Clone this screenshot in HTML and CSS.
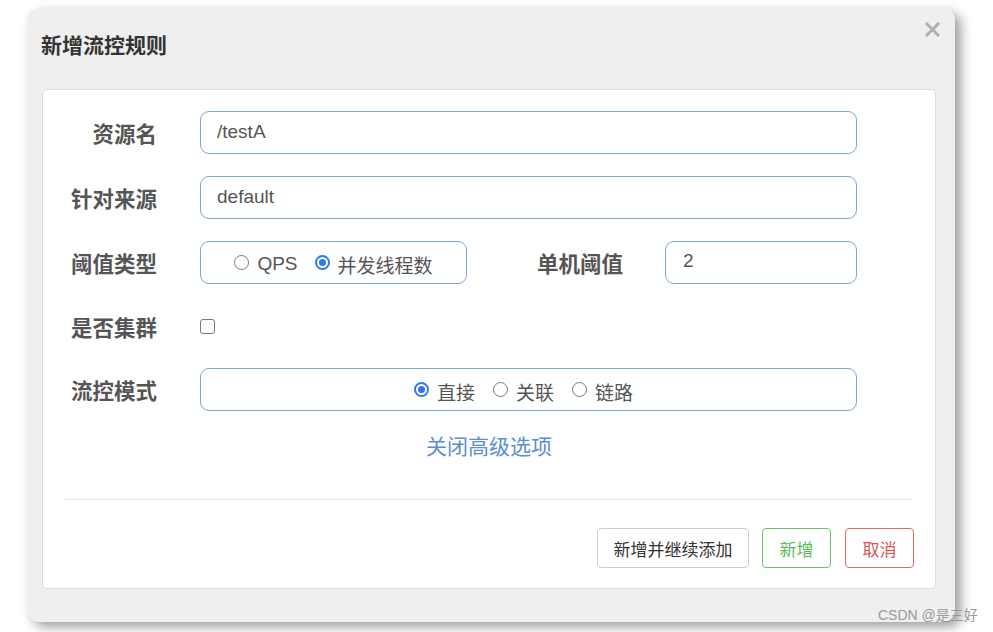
FILE: index.html
```html
<!DOCTYPE html>
<html lang="zh-CN">
<head>
<meta charset="utf-8">
<title>新增流控规则</title>
<link rel="stylesheet" href="styles.css">
</head>
<body>
<div class="dialog">
  <div class="dialog-header">
    <h3 class="dialog-title">新增流控规则</h3>
    <span class="close" aria-label="close">
      <svg width="15" height="15" viewBox="0 0 15 15"><path d="M2 2 L13 13 M13 2 L2 13" stroke="#b0b0b0" stroke-width="3" stroke-linecap="square"/></svg>
    </span>
  </div>
  <div class="panel">
    <div class="row">
      <label class="label">资源名</label>
      <div class="field wide">/testA</div>
    </div>
    <div class="row">
      <label class="label">针对来源</label>
      <div class="field wide">default</div>
    </div>
    <div class="row">
      <label class="label">阈值类型</label>
      <div class="field group small-group">
        <span class="opt"><span class="radio"></span>QPS</span>
        <span class="opt"><span class="radio on"></span>并发线程数</span>
      </div>
      <label class="label label2">单机阈值</label>
      <div class="field narrow">2</div>
    </div>
    <div class="row row-check">
      <label class="label">是否集群</label>
      <span class="checkbox"></span>
    </div>
    <div class="row">
      <label class="label">流控模式</label>
      <div class="field group wide mode-group">
        <span class="opt"><span class="radio on"></span>直接</span>
        <span class="opt"><span class="radio"></span>关联</span>
        <span class="opt"><span class="radio"></span>链路</span>
      </div>
    </div>
    <div class="link-row"><a class="link">关闭高级选项</a></div>
    <div class="divider"></div>
    <div class="actions">
      <button class="btn btn-default">新增并继续添加</button>
      <button class="btn btn-success">新增</button>
      <button class="btn btn-danger">取消</button>
    </div>
  </div>
</div>
<div class="watermark">CSDN @是三好</div>
</body>
</html>
```
FILE: styles.css
```css
* { box-sizing: border-box; }
html, body { margin: 0; padding: 0; background: #fff; }
body {
  padding: 8px 0 0 27px;
  font-family: "Liberation Sans", "Noto Sans CJK SC", sans-serif;
  color: #555;
  position: relative;
  width: 993px;
  height: 632px;
  overflow: hidden;
}
.dialog {
  width: 928px;
  height: 614px;
  background: #efefef;
  border-radius: 12px;
  box-shadow: 6px 5px 12px rgba(0,0,0,0.38);
  display: flex;
  flex-direction: column;
}
.dialog-header {
  height: 81px;
  padding: 24px 15px 0 14px;
  display: flex;
  justify-content: space-between;
  align-items: flex-start;
}
.dialog-title {
  margin: 0;
  font-family: "Noto Sans CJK SC", sans-serif;
  font-size: 21px;
  line-height: 25px;
  font-weight: 700;
  color: #333;
}
.close { margin-top: -10px; display: block; height: 15px; }
.close svg { display: block; }
.panel {
  margin: 0 19px 0 15px;
  height: 500px;
  background: #fff;
  border: 1px solid #dcdcdc;
  border-radius: 5px;
  padding: 21px 0 0;
}
.row {
  display: flex;
  align-items: center;
  height: 43px;
  margin-bottom: 22px;
}
.row.row-check { height: 40px; }
.label {
  width: 114px;
  margin-right: 43px;
  text-align: right;
  font-family: "Noto Sans CJK SC", sans-serif;
  font-weight: 700;
  font-size: 21.5px;
  color: #555;
  flex: none;
}
.label2 { width: 156px; margin-right: 42px; }
.field {
  height: 43px;
  border: 1px solid #7fa5d8;
  border-radius: 9px;
  padding: 0 16px;
  display: flex;
  align-items: center;
  font-size: 19px;
  color: #555;
  flex: none;
}
.field.wide { width: 657px; }
.field.narrow { width: 192px; padding-left: 17px; padding-bottom: 3px; }
.row .field.wide { padding-bottom: 1px; }
.small-group { width: 267px; }
.group { justify-content: center; gap: 17px; padding-top: 3px; }
.row .field.group { padding-bottom: 0; }
.row .mode-group { padding-right: 26px; gap: 18px; }
.opt {
  display: inline-flex;
  align-items: center;
  font-family: "Liberation Sans", "Noto Sans CJK SC", sans-serif;
  font-size: 19px;
  color: #555;
}
.radio {
  width: 15px;
  height: 15px;
  border: 1px solid #7a7a7a;
  border-radius: 50%;
  margin-right: 8px;
  margin-top: -4px;
  display: inline-block;
  position: relative;
  flex: none;
}
.radio.on {
  border: 2px solid #2f78ef;
}
.radio.on::after {
  content: "";
  position: absolute;
  left: 2px; top: 2px;
  width: 7px; height: 7px;
  border-radius: 50%;
  background: #2f78ef;
}
.checkbox {
  width: 15px; height: 15px;
  border: 1px solid #767676;
  border-radius: 3px;
  display: inline-block;
}
.link-row {
  text-align: center;
  margin-top: 0;
  height: 25px;
  line-height: 25px;
}
.link {
  font-family: "Noto Sans CJK SC", sans-serif;
  font-size: 21px;
  color: #5b8ece;
}
.divider {
  margin: 41px 22px 0;
  height: 1px;
  background: #e6e6e6;
}
.actions {
  margin: 28px 21px 0;
  display: flex;
  justify-content: flex-end;
  gap: 13px;
}
.btn {
  height: 40px;
  background: #fff;
  border: 1px solid #ccc;
  border-radius: 4px;
  font-family: "Noto Sans CJK SC", sans-serif;
  font-size: 17px;
  color: #333;
  padding: 0;
}
.btn-default { width: 152px; }
.btn-success { width: 69px; border-color: #6cc06c; color: #5cb85c; }
.btn-danger { width: 69px; border-color: #dc6a67; color: #d9534f; margin-left: 1px; }
.watermark {
  position: absolute;
  left: 878px;
  top: 604px;
  font-family: "Liberation Sans", "Noto Sans CJK SC", sans-serif;
  font-size: 14px;
  color: #9a9a9a;
}
```
